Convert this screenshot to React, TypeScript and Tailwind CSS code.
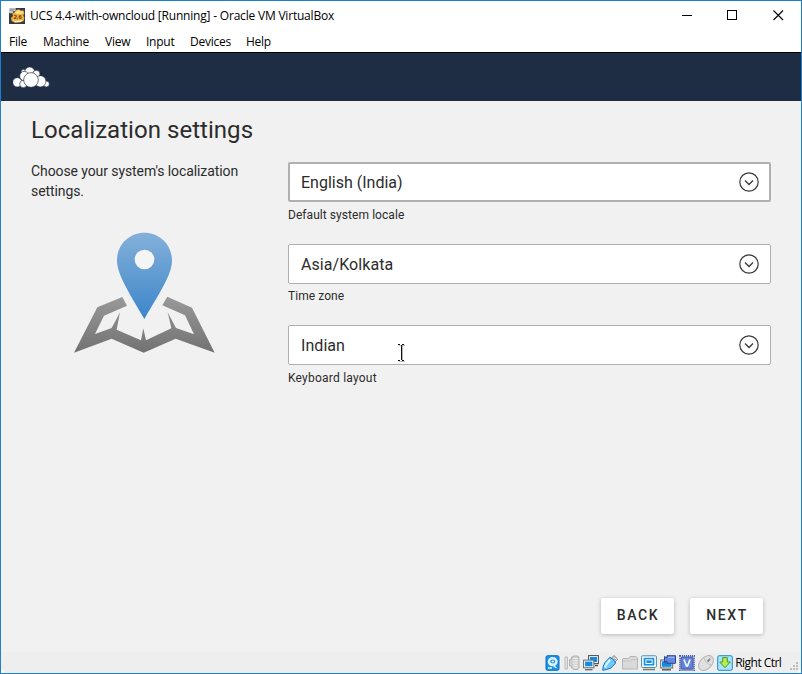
import React from "react";

const uiFont = "font-['Open_Sans','Noto_Sans',sans-serif]";

function Titlebar() {
  return (
    <header className={`h-[29px] flex items-center shrink-0 text-black ${uiFont}`}>
      <svg className="ml-2 w-4 h-4 shrink-0" viewBox="0 0 48 48">
        <rect width="48" height="48" fill="#343943" />
        <path d="M0 0H20V10H12V16H0Z" fill="#c7cbd1" />
        <path d="M3 4H17M3 8H14" stroke="#777d86" strokeWidth="2" />
        <path d="M17 12L22 6 30 4 36 8 43 7 46 15 43 22 46 30 44 39 35 43 18 44 8 39 6 30 12 24 10 17Z" fill="#ecae3c" />
        <path d="M18 13L23 8 30 6 35 10 42 9 43 16 35 19 22 18Z" fill="#ffdc83" />
        <path d="M9 35L19 39 42 36 35 42 18 43Z" fill="#fff0bf" />
        <text x="26" y="34" textAnchor="middle" fontFamily="Liberation Sans" fontSize="17" fontWeight="700" fill="#603411">2.6</text>
      </svg>
      <span className="ml-[5px] w-[310px] text-[12px] tracking-[-0.2px] whitespace-nowrap leading-4">UCS 4.4-with-owncloud [Running] - Oracle VM VirtualBox</span>
      <div className="ml-auto mr-[17px] flex items-center gap-[35px]">
        <svg className="w-[11px] h-[11px]" viewBox="0 0 11 11"><path d="M1 5.5H11" stroke="#000" /></svg>
        <svg className="w-[11px] h-[11px]" viewBox="0 0 11 11"><rect x=".5" y=".5" width="9" height="9" fill="none" stroke="#000" /></svg>
        <svg className="w-[11px] h-[11px]" viewBox="0 0 11 11"><path d="M.5.5L10 10M10 .5L.5 10" stroke="#000" strokeWidth="1.1" /></svg>
      </div>
    </header>
  );
}

function Menu() {
  return (
    <nav className={`h-[22px] pt-[2px] flex items-center shrink-0 pl-2 text-[12px] tracking-[-0.25px] leading-4 text-black ${uiFont}`}>
      <span className="w-[34px]">File</span>
      <span className="w-[62px]">Machine</span>
      <span className="w-[41px]">View</span>
      <span className="w-[44px]">Input</span>
      <span className="w-[56px]">Devices</span>
      <span>Help</span>
    </nav>
  );
}

function Cloud() {
  return (
    <svg className="w-[38px] h-[22px]" viewBox="0 0 114 66" fill="#fff" stroke="#1e2d44" strokeWidth="2">
      <circle cx="32" cy="15" r="8" /><circle cx="50" cy="15" r="15" /><circle cx="70" cy="21" r="11" />
      <circle cx="34" cy="27" r="14" /><circle cx="13" cy="46" r="14" />
      <circle cx="31" cy="51" r="11" />
      <circle cx="100" cy="51" r="9" /><circle cx="82" cy="43" r="17" />
      <circle cx="54" cy="39" r="22" />
    </svg>
  );
}

function MapPin() {
  return (
    <svg className="w-[170px] h-[145px]" viewBox="0 0 510 435">
      <defs>
        <linearGradient id="pin" x1="0" y1="0" x2="0" y2="1"><stop stopColor="#84b0da" /><stop offset="1" stopColor="#3c86c9" /></linearGradient>
        <linearGradient id="map" x1="0" y1="0" x2="0" y2="1"><stop stopColor="#999" /><stop offset="1" stopColor="#727272" /></linearGradient>
      </defs>
      <path fill="url(#map)" d="M187 231L201 257 132 287 105 342 155 324 180 277 170 329 243 361 250 325 258 361 334 325 323 277 348 324 402 343 375 286 307 256 322 230 396 263 464 398 347 356 251 398 155 356 42 398 112 262Z" />
      <path fill="url(#pin)" d="M253 38C207 38 171 75 171 121C171 159 198 204 253 297C309 204 336 159 336 121C336 75 300 38 253 38Z" />
      <circle cx="253.5" cy="118.5" r="29.5" fill="#f5f5f5" />
    </svg>
  );
}

function Field({ value, label, active, raised, children }: { value: string; label: string; active?: boolean; raised?: boolean; children?: React.ReactNode }) {
  return (
    <div className="h-full">
      <div className={`relative h-10 flex items-center justify-between bg-white rounded-[2px] border-[#b0b0b0] ${active ? "border-2 pl-[11px] pr-[10px]" : "border pl-3 pr-[11px]"}`}>
        <span className={`pt-[2px] text-[16px] leading-6 ${active ? "tracking-[0px]" : "tracking-[0.06px]"}`}>{value}</span>
        <svg className="w-5 h-5" viewBox="0 0 20 20" fill="none" stroke="#3a3a3a" strokeWidth="1.2">
          <circle cx="10" cy="10" r="9.2" /><path d="M6 8.5L10 12.5 14 8.5" strokeWidth="1.35" />
        </svg>
        {children}
      </div>
      <div className={`text-[12px] leading-[18px] ${raised ? "mt-[3px]" : "mt-1"} ${children ? "tracking-[0.22px]" : "tracking-[0.06px]"}`}>{label}</div>
    </div>
  );
}

function Cursor() {
  return (
    <svg className="absolute left-[109px] top-[18px] w-[7px] h-[18px]" viewBox="0 0 7 18" shapeRendering="crispEdges">
      <path d="M1 1.5H7M4.5 2V17M1 17.5H7" stroke="#b5b5b5" />
      <path d="M0 .5H2M4 .5H6M0 16.5H2M4 16.5H6M3 1V16" stroke="#111" />
    </svg>
  );
}

const statusIcons: React.ReactNode[] = [
  <><rect x="1" y=".7" width="13" height="14.6" rx="1.5" fill="#1b91e6" stroke="#0671c2" /><ellipse cx="7.7" cy="6.7" rx="5" ry="4.6" fill="#d8f2ff" /><ellipse cx="7.7" cy="6.5" rx="2.4" ry="2" fill="#1b91e6" /><circle cx="7.7" cy="6.5" r="1.1" fill="#fff" /><path d="M5 8L11.5 13M3 13H7" stroke="#e0f5ff" strokeWidth="1.4" /></>,
  <><path d="M1 2H3.5V14H1Z" fill="#e2e2e2" stroke="#bdbdbd" /><path d="M5.5 4.5H7.5V2H9V1H14V2H15V13H14V14.5H9V13H7.5V11H5.5Z" fill="#cfcfcf" stroke="#aaa" strokeWidth=".8" /><path d="M9 3.5H14M9 5.8H14M9 8.1H14M9 10.4H14M9 12.7H14" stroke="#f0f0f0" /></>,
  <><rect x="5.6" y=".6" width="9.8" height="8" fill="#e8f8ff" stroke="#4b4b4b" strokeWidth="1" /><rect x="7" y="2" width="7" height="5" fill="#128ce0" /><path d="M12 10.5H15" stroke="#4b4b4b" strokeWidth="1.4" /><rect x=".6" y="5.1" width="10.3" height="7.7" fill="#f4fcff" stroke="#666" strokeWidth="1" /><rect x="2.1" y="6.6" width="7.3" height="4.7" fill="#128ce0" /><path d="M2 14.7H9.5" stroke="#666" strokeWidth="1.3" /></>,
  <><path d="M9 3.5L12 .6 15.6 4.1 12.8 7.2Z" fill="#f5f5f5" stroke="#777" /><path d="M12 2.5V3.5M13 4V5" stroke="#555" /><path d="M7.8 2.3Q11.8 3.5 13.7 8L9 13Q5 14.7 .7 15.3Q.7 11 3 7.5Z" fill="#70caf8" stroke="#1676bb" /><path d="M8 4.7L4.5 9 3 12.5" stroke="#d9f6ff" strokeWidth="2.2" fill="none" /></>,
  <><path d="M.5 4L1.5 3.5H6.5L8 1.5H14L15.5 3V14H.5Z" fill="#d9d9d9" stroke="#b5b5b5" /><path d="M1 6H9L10 4.5H15" stroke="#c6c6c6" fill="none" /></>,
  <><rect x=".6" y=".8" width="14.8" height="11.7" rx="1" fill="#f4fdff" stroke="#4f8ba6" /><rect x="2.7" y="2.8" width="10.6" height="7.7" fill="#1690e4" /><rect x="4.9" y="4.8" width="6.2" height="3.7" fill="#1690e4" stroke="#f4fdff" /><path d="M2 14.5H14" stroke="#777" strokeWidth="1.5" /></>,
  <><rect x=".7" y="5" width="12" height="8" fill="#e8f8ff" stroke="#666" /><rect x="2" y="6.2" width="9.5" height="5.6" fill="#128ce0" /><path d="M2 14.8H11" stroke="#555" strokeWidth="1.4" /><path d="M4.5 1.5L7 3V.7H15.5V8.3H7V6L4.5 7.5Z" fill="#6487df" stroke="#2d4590" /><path d="M8 2.3H14.5" stroke="#a7bef9" /></>,
  <><rect x=".9" y=".9" width="14.2" height="14.2" fill="none" stroke="#344a9b" strokeWidth="1.6" strokeDasharray="1 1" /><rect x="2" y="2" width="12" height="12" rx="1" fill="#6283d9" stroke="#3e57ad" /><path d="M5 4.5L7.5 11H8.5L11 4.5" stroke="#f6fbff" strokeWidth="1.7" fill="none" /></>,
  <><ellipse cx="8" cy="8" rx="8.7" ry="5.8" transform="rotate(-45 8 8)" fill="#e0e0e0" stroke="#b5b5b5" /><path d="M6 3Q7 8 13 10M9 7L13 2" fill="none" stroke="#c0c0c0" /><path d="M9.5 6.5L12 4" stroke="#8c8c8c" strokeWidth="2" /></>,
  <><rect x=".7" y=".7" width="14.6" height="14.6" rx="1.5" fill="#a8e5ff" stroke="#2389c5" /><path d="M5.7 2.7H10.3V7H13.3L8 12.7 2.7 7H5.7Z" fill="#b5f052" stroke="#4b9524" strokeWidth="1" /></>,
];

function StatusBar() {
  return (
    <footer className={`h-[21px] bg-[#eeeeee] shrink-0 flex items-center pl-[544px] text-[12px] text-black ${uiFont}`}>
      <div className="flex gap-[3.15px]">
        {statusIcons.map((icon, i) => <svg key={i} className="w-4 h-4 shrink-0" viewBox="0 0 16 16">{icon}</svg>)}
      </div>
      <span className="ml-[2px] tracking-[-0.55px] leading-4 whitespace-nowrap">Right Ctrl</span>
      <svg className="ml-auto mt-[9px] mr-[1px] w-[10px] h-[10px] shrink-0" viewBox="0 0 10 10" fill="#bdbdbd"><path d="M6 0H8V2H6ZM3 3H5V5H3ZM6 3H8V5H6ZM0 6H2V8H0ZM3 6H5V8H3ZM6 6H8V8H6Z" /></svg>
    </footer>
  );
}

export default function App() {
  return (
    <div className="relative w-[802px] h-[674px] bg-white border border-[#1c7fd0] overflow-hidden flex flex-col">
      <Titlebar />
      <Menu />
      <div className="h-[49px] shrink-0 border-t border-black bg-[#1e2d44] pl-3 pt-[14px]"><Cloud /></div>
      <main className="flex-1 min-h-0 bg-[#f1f1f1] text-[#2c2c2c] font-[Roboto,sans-serif] flex flex-col">
        <h1 className="ml-[30px] mt-[13px] h-8 text-[24px] leading-8 tracking-[0.04px]">Localization settings</h1>
        <div className="flex mt-[15px] pl-[30px]">
          <aside className="w-[257px] shrink-0">
            <p className="w-[225px] h-10 text-[14px] leading-5 tracking-[-0.09px]">Choose your system's localization settings.</p>
            <div className="ml-[29px] mt-[19px]"><MapPin /></div>
          </aside>
          <section className="w-[483px] mt-px grid grid-rows-[82px_81px_82px]">
            <Field value="English (India)" label="Default system locale" active />
            <Field value="Asia/Kolkata" label="Time zone" raised />
            <Field value="Indian" label="Keyboard layout"><Cursor /></Field>
          </section>
        </div>
        <div className="mt-auto mb-[18px] mr-[38px] flex justify-end gap-4">
          <button className="w-[73px] h-9 pl-px pb-[2px] rounded-[2px] bg-white text-[14px] font-medium tracking-[1.6px] shadow-[0_1px_4px_#0000003d]">BACK</button>
          <button className="w-[73px] h-9 pl-px pb-[2px] rounded-[2px] bg-white text-[14px] font-medium tracking-[1.6px] shadow-[0_1px_4px_#0000003d]">NEXT</button>
        </div>
      </main>
      <StatusBar />
      <span className="absolute -left-px -top-px w-1 h-1 bg-white" />
      <span className="absolute -right-px -top-px w-1 h-1 bg-white" />
      <span className="absolute -left-px -bottom-px w-1 h-1 bg-white" />
      <span className="absolute -right-px -bottom-px w-1 h-1 bg-white" />
    </div>
  );
}
